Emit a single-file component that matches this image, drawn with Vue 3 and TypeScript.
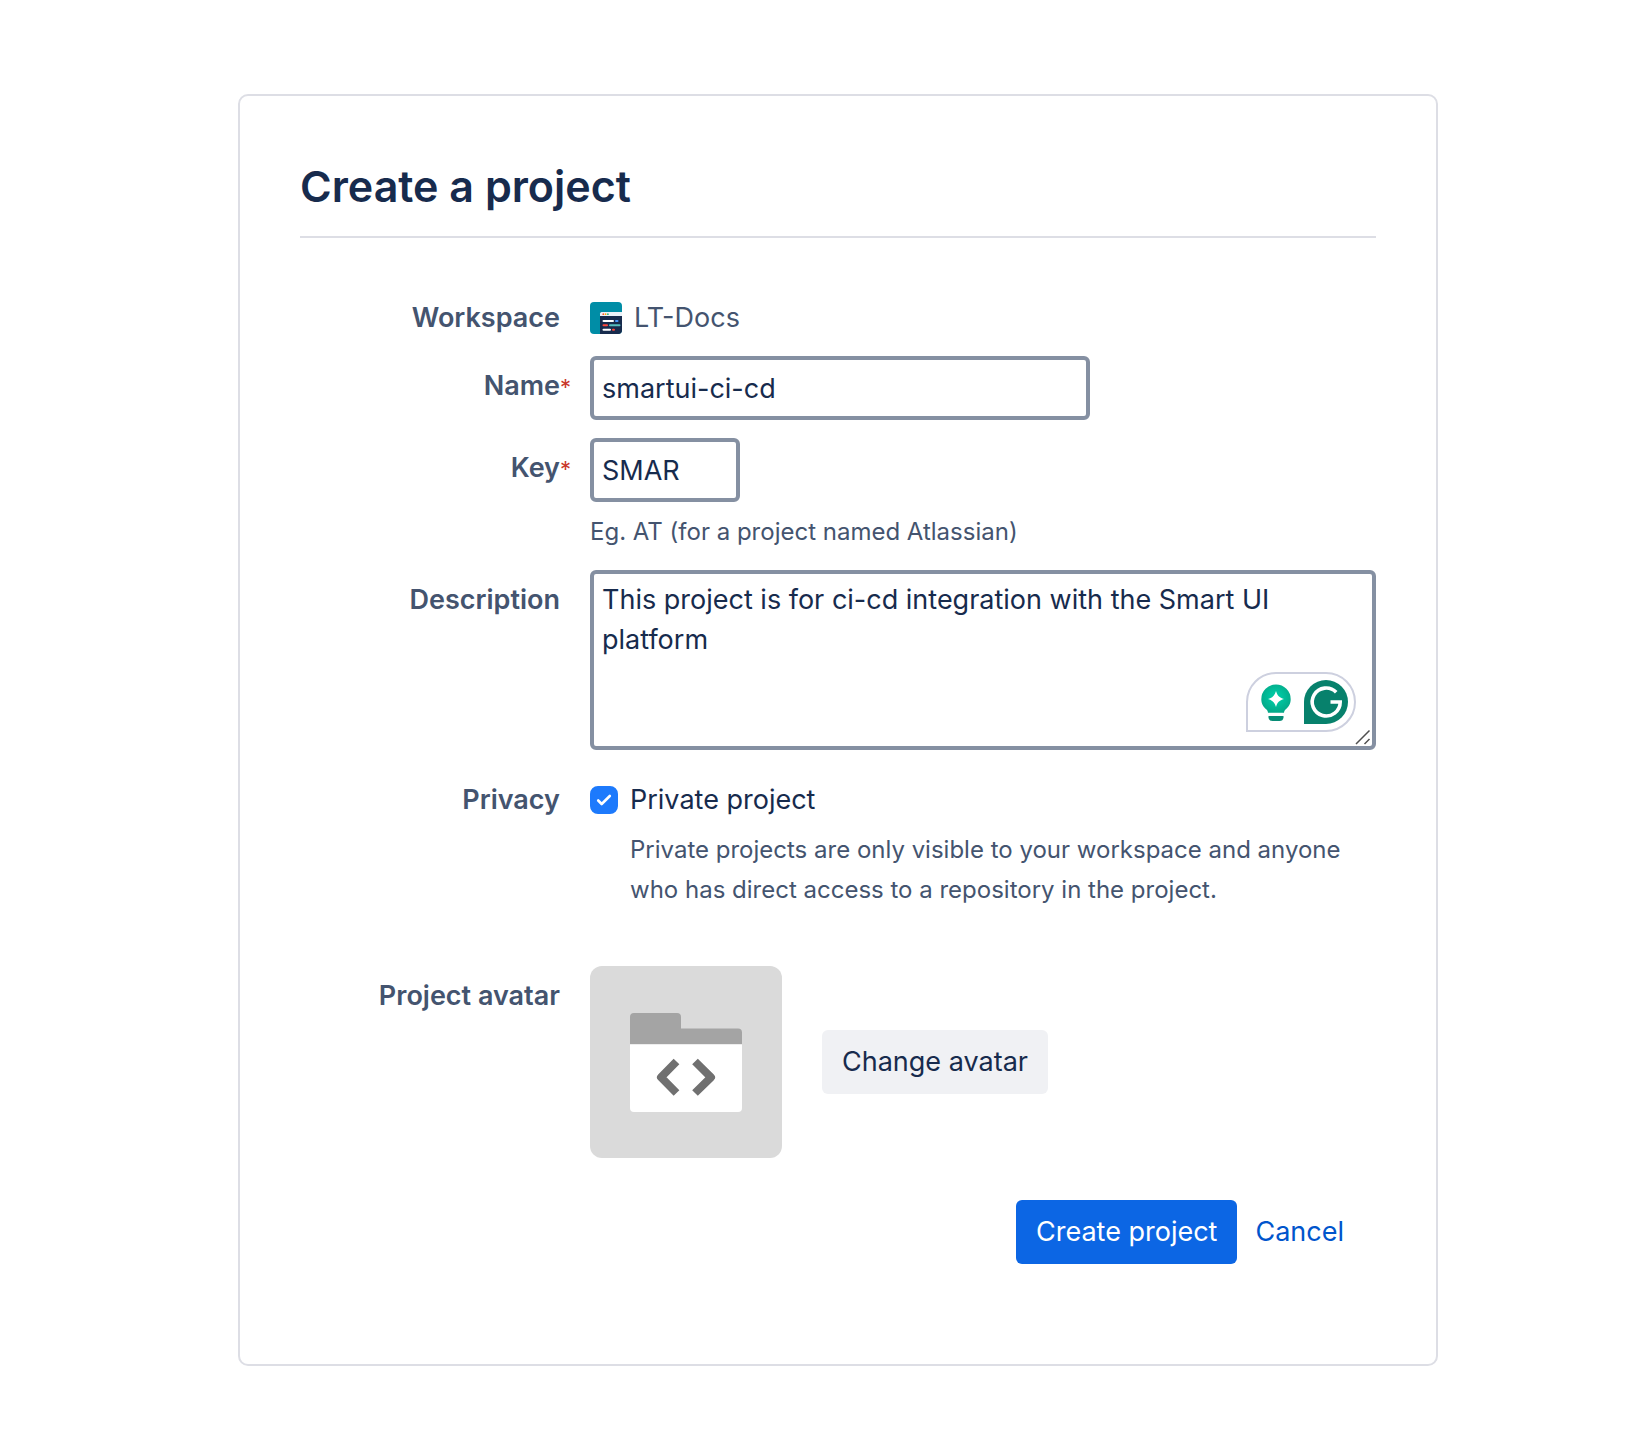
<script setup lang="ts">
import { ref } from 'vue'

const name = ref('smartui-ci-cd')
const projectKey = ref('SMAR')
const description = ref('This project is for ci-cd integration with the Smart UI platform')
const isPrivate = ref(true)
</script>

<template>
  <main class="page">
    <form class="card" @submit.prevent>
      <h1 class="title">Create a project</h1>

      <div class="row">
        <div class="label">Workspace</div>
        <div class="field workspace">
          <svg class="workspace-icon" viewBox="0 0 32 32" aria-hidden="true">
            <rect width="32" height="32" fill="#008da6" />
            <path d="M10 32V11.500Q10 10 11.500 10H32V32Z" fill="#172b4d" />
            <path d="M10 14V11.500Q10 10 11.500 10H32V14Z" fill="#ebf2f9" />
            <circle cx="13.300" cy="12.200" r="0.900" fill="#ff5630" />
            <circle cx="15.600" cy="12.200" r="0.900" fill="#ffab00" />
            <circle cx="17.900" cy="12.200" r="0.900" fill="#36b37e" />
            <g fill="none" stroke-width="2" stroke-linecap="round">
              <path d="M13.500 19H23" stroke="#fff" />
              <path d="M26 19H27.500" stroke="#4c9aff" />
              <path d="M13.500 23.300H17" stroke="#ff4a3d" />
              <path d="M20 23.300H29.500" stroke="#57bfc0" />
              <path d="M13.500 27.700H20" stroke="#fff" />
              <path d="M23 27.700H24" stroke="#ff4a3d" />
            </g>
          </svg>
          <span>LT-Docs</span>
        </div>
      </div>

      <div class="row">
        <label class="label" for="name">Name<span class="required">*</span></label>
        <div class="field">
          <input id="name" v-model="name" class="text-box name-box" type="text" required />
        </div>
      </div>

      <div class="row">
        <label class="label" for="key">Key<span class="required">*</span></label>
        <div class="field">
          <input id="key" v-model="projectKey" class="text-box key-box" type="text" required />
          <p class="hint">Eg. AT (for a project named Atlassian)</p>
        </div>
      </div>

      <div class="row">
        <label class="label" for="description">Description</label>
        <div class="field description">
          <textarea id="description" v-model="description" class="text-box area" rows="4" spellcheck="false"></textarea>
          <div class="assistant">
            <svg viewBox="0 0 106 56" width="106" height="56" aria-hidden="true">
              <defs>
                <radialGradient id="bulb" cx="0.500" cy="0.450" r="0.600">
                  <stop offset="0.300" stop-color="#00c5a0" />
                  <stop offset="1" stop-color="#05a585" />
                </radialGradient>
              </defs>
              <path d="M28 10.500a14.700 14.700 0 0 1 14.700 14.700c0 5-2.700 8.300-5.200 10.400-1 .9-1.300 1.800-1.500 3.100H20c-.2-1.300-.5-2.200-1.500-3.100-2.500-2.100-5.200-5.400-5.200-10.400A14.700 14.700 0 0 1 28 10.500Z" fill="url(#bulb)" />
              <path d="M28 17c1.300 4.500 3.300 6.700 8 8-4.700 1.300-6.700 3.500-8 8-1.300-4.500-3.300-6.700-8-8 4.700-1.300 6.700-3.500 8-8Z" fill="#fff" />
              <path d="M20.500 42H35.500V43.500Q35 47 31.500 47H24.500Q21 47 20.500 43.500Z" fill="#078c75" />
              <path d="M78 6a22 22 0 1 1 0 44H56V28A22 22 0 0 1 78 6Z" fill="#07816c" />
              <path d="M88.200 18.200A14 14 0 1 0 92.200 28H82.500" fill="none" stroke="#fff" stroke-width="3.600" />
            </svg>
          </div>
          <svg class="grip" viewBox="0 0 18 18" aria-hidden="true">
            <path d="M2 16L15.500 2.500M10.500 16L15.500 11" fill="none" stroke="#505050" stroke-width="1.500" />
          </svg>
        </div>
      </div>

      <div class="row privacy-row">
        <div id="privacy-label" class="label">Privacy</div>
        <div class="field privacy" role="group" aria-labelledby="privacy-label">
          <span class="check">
            <input id="private" v-model="isPrivate" class="check-box" type="checkbox" aria-describedby="private-help" />
            <svg v-if="isPrivate" class="check-mark" viewBox="0 0 28 28" aria-hidden="true">
              <path d="M8.200 14.500L11.700 18L19.800 10" fill="none" stroke="#fff" stroke-width="2.600" stroke-linecap="round" stroke-linejoin="round" />
            </svg>
          </span>
          <div class="privacy-text">
            <label class="check-label" for="private">Private project</label>
            <p id="private-help" class="hint">
              Private projects are only visible to your workspace and anyone who has direct access to a repository in the project.
            </p>
          </div>
        </div>
      </div>

      <div class="row avatar-row">
        <div class="label">Project avatar</div>
        <div class="field avatar-field">
          <svg class="avatar" viewBox="0 0 192 192" role="img" aria-label="Project avatar">
            <rect width="192" height="192" fill="#dadada" />
            <path d="M40 78V51Q40 47 44 47H87Q91 47 91 51V62.500H148Q152 62.500 152 66.500V78Z" fill="#a4a4a4" />
            <path d="M40 78.500H152V142Q152 146 148 146H44Q40 146 40 142Z" fill="#fff" />
            <g fill="none" stroke="#707070" stroke-width="8" stroke-linejoin="round">
              <path d="M86.500 95.500L71 111.300L86.500 127" />
              <path d="M105 95.500L121 111.300L105 127" />
            </g>
          </svg>
          <button class="button" type="button">Change avatar</button>
        </div>
      </div>

      <div class="actions">
        <button class="button primary" type="submit">Create project</button>
        <a class="cancel" href="#">Cancel</a>
      </div>
    </form>
  </main>
</template>

<style>
body {
  margin: 0;
  background: #fff;
}
</style>

<style scoped>
.page {
  padding: 94px 192px 90px 238px;
  color: #172b4d;
  font: 400 27px/40px Inter, "Liberation Sans", sans-serif;
}

.card {
  box-sizing: border-box;
  padding: 60px;
  border: 2px solid #dddee5;
  border-radius: 10px;
}

.title {
  margin: 0 0 50px;
  padding-bottom: 20px;
  border-bottom: 2px solid #dddee5;
  font-size: 43px;
  font-weight: 600;
  line-height: 60px;
}

.row {
  display: flex;
  gap: 30px;
  margin-bottom: 18px;
}

.label {
  flex: none;
  width: 260px;
  padding-top: 10px;
  color: #44546f;
  font-weight: 600;
  text-align: right;
  white-space: nowrap;
}

.required {
  display: inline-block;
  width: 0;
  color: #c9372c;
  font-size: 22px;
  font-weight: 400;
}

.field {
  flex: 1;
  min-width: 0;
}

.workspace {
  display: flex;
  align-items: center;
  gap: 12px;
  padding-top: 10px;
  color: #44546f;
}

.workspace-icon {
  width: 32px;
  height: 32px;
  border-radius: 4px;
}

.text-box {
  display: block;
  box-sizing: border-box;
  width: 100%;
  margin: 0;
  padding: 6px 8px;
  border: 4px solid #8590a2;
  border-radius: 6px;
  outline: none;
  background: #fff;
  color: inherit;
  font: inherit;
}

.name-box,
.key-box {
  height: 64px;
}

.name-box {
  max-width: 500px;
}

.key-box {
  max-width: 150px;
}

.hint {
  margin: 10px 0 0;
  color: #44546f;
  font-size: 24px;
}

.description {
  position: relative;
}

.area {
  resize: none;
  overflow: hidden;
}

.assistant {
  position: absolute;
  right: 20px;
  bottom: 18px;
  display: flex;
  border: 2px solid #cdd0df;
  border-radius: 30px 30px 30px 0;
  background: #fff;
}

.grip {
  position: absolute;
  right: 4px;
  bottom: 4px;
  width: 18px;
  height: 18px;
  pointer-events: none;
}

.privacy-row {
  margin-top: 20px;
}

.privacy {
  display: flex;
  gap: 12px;
  padding-top: 10px;
}

.check {
  display: grid;
  flex: none;
  width: 28px;
  height: 40px;
  align-items: center;
}

.check-box,
.check-mark {
  grid-area: 1 / 1;
  width: 28px;
  height: 28px;
  margin: 0;
}

.check-box {
  appearance: none;
  border: 2px solid #8590a2;
  border-radius: 8px;
}

.check-box:checked {
  border-color: #1d7afc;
  background: #1d7afc;
}

.check-mark {
  pointer-events: none;
}

.privacy-text {
  flex: 1;
}

.check-label {
  display: block;
}

.avatar-row {
  margin-top: 56px;
  margin-bottom: 42px;
}

.avatar-field {
  display: flex;
  align-items: center;
  gap: 40px;
}

.avatar {
  width: 192px;
  height: 192px;
  border-radius: 12px;
}

.button {
  padding: 12px 20px;
  border: 0;
  border-radius: 6px;
  background: #f0f1f4;
  color: inherit;
  font: inherit;
  white-space: nowrap;
}

.primary {
  background: #0c66e4;
  color: #fff;
}

.actions {
  display: flex;
  align-items: center;
  justify-content: flex-end;
  gap: 18px;
  padding: 0 32px 40px 0;
}

.cancel {
  color: #0055cc;
  text-decoration: none;
}
</style>
